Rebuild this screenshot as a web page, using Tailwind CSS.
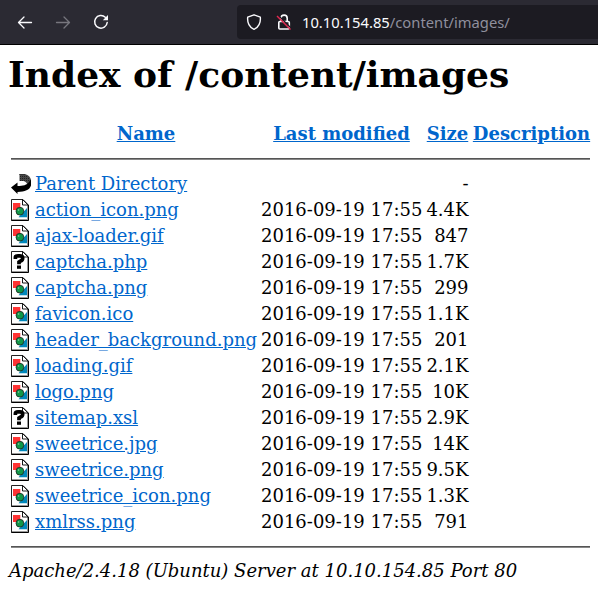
<!DOCTYPE html>
<html lang="en">
<head>
<meta charset="utf-8">
<title>Index of /content/images</title>
<script src="https://cdn.jsdelivr.net/npm/@tailwindcss/browser@4"></script>
</head>
<body class="w-[598px] h-[590px] overflow-hidden bg-white text-black">
<svg class="hidden">
  <symbol id="page" viewBox="0 0 18 22">
    <path d="M.5.5h11.500l5 5v16H.5z" fill="#fff" stroke="#222"/>
    <path d="M1 20.500h15.500V6" stroke="#999" fill="none"/>
    <path d="M.5 21.500h17V6" stroke="#000" fill="none"/>
    <path d="M11.500.5v5.500h5.500z" fill="#fff" stroke="#000" stroke-width=".9"/>
  </symbol>
  <symbol id="image" viewBox="0 0 18 22">
    <use href="#page"/>
    <path d="M2 4h7.300v7H2z" fill="#ff3333"/>
    <path d="M16 9v9.300H7.500z" fill="#0088bb"/>
    <circle cx="8.900" cy="12.200" r="3.900" fill="#109848" stroke="#222" stroke-width=".8"/>
    <circle cx="7.600" cy="11" r=".8" fill="#99ccaa"/>
  </symbol>
  <symbol id="unknown" viewBox="0 0 18 22">
    <use href="#page"/>
    <path d="M4.400 8V6.500Q4.400 4.800 7 4.800h2Q11.700 4.800 11.700 7t-2 3L8 11v2.300" fill="none" stroke="#000" stroke-width="3.700"/>
    <path d="M6 14.500h4v3.300H6z"/>
  </symbol>
  <symbol id="back" viewBox="0 0 20 22">
    <path d="M8.500 1H14c3.500 1 5.500 3 6 6l-3.500 5c-1-2.500-2-3.700-4-4H8.500z" fill="#484848"/>
    <path d="M8.500 1.500H14M9 3.500h7M9 5.500h9M9 7.500h9" stroke="#222" stroke-dasharray="1 1"/>
    <path d="M0 14.500L6.500 9.500V13c5.500 0 9.500-1 11.500-4l1.500-2.500.5 1v5c-1.500 4.500-6 6.300-13.500 6.500v2z"/>
  </symbol>
</svg>
<header class="flex h-[45px] items-center border-b border-black bg-[#2b2a33]">
  <svg class="ml-[17px] size-4" viewBox="0 0 16 16" fill="none" stroke="#fbfbfe" stroke-width="1.300" stroke-linecap="round" stroke-linejoin="round"><path d="M14.500 8.500H1.500M7 3L1.500 8.500 7 14"/></svg>
  <svg class="ml-[22px] size-4" viewBox="0 0 16 16" fill="none" stroke="#77767e" stroke-width="1.300" stroke-linecap="round" stroke-linejoin="round"><path d="M1.500 8.500h13M9 3l5.500 5.500L9 14"/></svg>
  <svg class="ml-[22px] size-4" viewBox="0 0 16 16" fill="none" stroke="#fbfbfe" stroke-width="1.500" stroke-linecap="round"><path d="M12.300 3.300A6.300 6.300 0 1 0 14.200 8.500"/><path d="M15 1v5.200H9.800z" fill="#fbfbfe" stroke="none"/></svg>
  <div class="ml-[128px] flex h-[34px] flex-1 items-center rounded-l-[4px] bg-[#1c1b22]">
    <svg class="ml-[9px] size-4" viewBox="0 0 16 16" fill="none" stroke="#fbfbfe" stroke-width="1.400" stroke-linejoin="round"><path d="M8 .8L14.300 3.200C14.900 8.500 12.500 13.500 8 15.300 3.500 13.500 1.100 8.500 1.700 3.200z"/></svg>
    <svg class="ml-[14px] size-4" viewBox="0 0 16 16" fill="none" stroke="#fbfbfe" stroke-width="1.600"><path d="M5 7V4.200a3 3 0 0 1 6.200 0V7"/><rect x="2.800" y="7.500" width="10.500" height="7.500" rx="1"/><path d="M2 1l13.500 13.500" stroke="#1c1b22" stroke-width="1.300"/><path d="M1 2l13.500 13.500" stroke="#e22850" stroke-width="1.400"/></svg>
    <p class="ml-[10px] whitespace-nowrap font-['Noto_Sans',sans-serif] text-[14.750px] text-[#8f8f9d]"><span class="text-[#fbfbfe]">10.10.154.85</span>/content/images/</p>
  </div>
</header>
<main class="px-2 font-['DejaVu_Serif',serif] text-[18px] leading-[26px]">
  <h1 class="mt-[8px] h-[42px] whitespace-nowrap text-[36px] leading-[42px] font-bold">Index of /content/images</h1>
  <div class="mt-[26px] ml-[27px] grid grid-cols-[222px_161px_43px_118px] gap-x-[4px] whitespace-nowrap text-center font-bold text-[#0066cc] [&_a]:underline">
    <a href="#">Name</a><a href="#">Last modified</a><a href="#">Size</a><a href="#" class="-ml-px">Description</a>
  </div>
  <hr class="mt-[11px] ml-[3px] h-[2px] border-0 border-t border-[#555] bg-[#888]">
  <div class="mt-[11px]" id="files"></div>
  <hr class="mt-[11px] ml-[3px] h-[2px] border-0 border-t border-[#555] bg-[#888]">
  <address class="mt-[10px] ml-px whitespace-nowrap italic">Apache/2.4.18 (Ubuntu) Server at 10.10.154.85 Port 80</address>
</main>
<script>
const modified = '2016-09-19 17:55';
const rows = [
  ['back','Parent Directory','','-'],
  ['image','action_icon.png',modified,'4.4K'],
  ['image','ajax-loader.gif',modified,'847'],
  ['unknown','captcha.php',modified,'1.7K'],
  ['image','captcha.png',modified,'299'],
  ['image','favicon.ico',modified,'1.1K'],
  ['image','header_background.png',modified,'201'],
  ['image','loading.gif',modified,'2.1K'],
  ['image','logo.png',modified,'10K'],
  ['unknown','sitemap.xsl',modified,'2.9K'],
  ['image','sweetrice.jpg',modified,'14K'],
  ['image','sweetrice.png',modified,'9.5K'],
  ['image','sweetrice_icon.png',modified,'1.3K'],
  ['image','xmlrss.png',modified,'791']
];
document.getElementById('files').innerHTML = rows.map(([icon, name, date, size]) =>
  `<div class="ml-[3px] grid h-[26px] grid-cols-[20px_222px_161px_42.500px] items-center gap-x-[4px] whitespace-nowrap">
    <svg class="h-[22px] ${icon === 'back' ? 'w-[20px]' : 'w-[18px]'}"><use href="#${icon}"/></svg>
    <a href="#" class="justify-self-start text-[#0066cc] underline">${name}</a>
    <span class="text-right">${date}</span><span class="justify-self-end">${size}</span>
  </div>`).join('');
</script>
</body>
</html>
